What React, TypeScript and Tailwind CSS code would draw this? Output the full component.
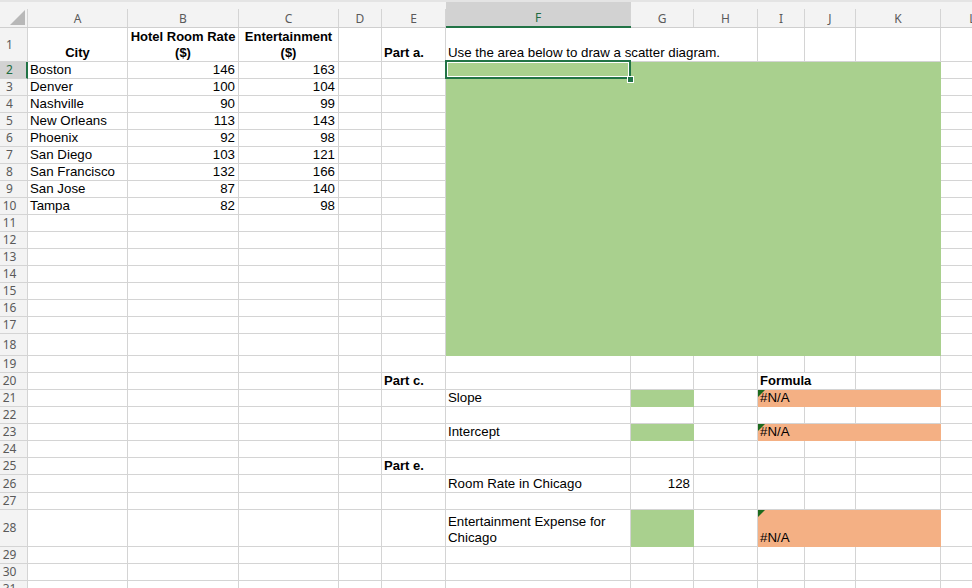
import React from "react";

const GRID = "border-r border-b border-[#d4d4d4]";
const GREEN = "bg-[#a9d08e] border-r border-b border-[#a9d08e]";
const ORANGE = "relative bg-[#f4b084] border-r border-b border-[#f4b084]";

type CP = { children?: React.ReactNode; className?: string };

function Cell({ children, className = "" }: CP) {
  return <div className={`flex items-end whitespace-nowrap ${GRID} ${className}`}>{children}</div>;
}

function Tri() {
  return (
    <svg className="absolute left-0 top-0" width="7" height="7" viewBox="0 0 7 7">
      <polygon points="0,0 7,0 0,7" fill="#1d6a1d" />
    </svg>
  );
}

function RH({ n, active = false }: { n: number; active?: boolean }) {
  return (
    <div
      className={
        active
          ? "flex items-center bg-[#d2d2d2] border-b border-b-[#d4d4d4] border-r-2 border-r-[#217346] text-[#1e6b41] font-['Noto_Sans',sans-serif] text-[12px] leading-[16px]"
          : "flex items-center bg-[#f3f3f3] border-r border-b border-[#d4d4d4] text-[#5a5a5a] font-['Noto_Sans',sans-serif] text-[12px] leading-[16px]"
      }
    >
      <span className="w-[19px] text-center">{n}</span>
    </div>
  );
}

function CH({ l, active = false }: { l: string; active?: boolean }) {
  return (
    <div
      className={
        active
          ? "flex items-end bg-[#d2d2d2] border-b-2 border-[#217346] text-[#1e6b41] font-['Noto_Sans',sans-serif] text-[12px] leading-[16px] shadow-[inset_0_2px_0_#e4e4e4]"
          : "flex items-end bg-[#f3f3f3] border-b border-[#cfcfcf] text-[#5a5a5a] font-['Noto_Sans',sans-serif] text-[12px] leading-[16px] shadow-[inset_0_2px_0_#e4e4e4]"
      }
    >
      <span className="flex-1 text-center">{l}</span>
      <div className="w-px h-[18px] bg-[#d4d4d4]" />
    </div>
  );
}

const cities: [string, number, number][] = [
  ["Boston", 146, 163],
  ["Denver", 100, 104],
  ["Nashville", 90, 99],
  ["New Orleans", 113, 143],
  ["Phoenix", 92, 98],
  ["San Diego", 103, 121],
  ["San Francisco", 132, 166],
  ["San Jose", 87, 140],
  ["Tampa", 82, 98],
];

const cols = ["A", "B", "C", "D", "E", "F", "G", "H", "I", "J", "K", "L"];

export default function App() {
  const cells: React.ReactNode[] = [];

  // header row
  cells.push(
    <div key="corner" className="flex items-end bg-[#f3f3f3] border-b border-[#cfcfcf] shadow-[inset_0_2px_0_#e4e4e4]">
      <div className="flex-1 h-full relative">
        <svg className="absolute left-[10px] top-[10px]" width="15" height="15" viewBox="0 0 15 15">
          <polygon points="15,0 15,15 0,15" fill="#b8b8b8" />
        </svg>
      </div>
      <div className="w-px h-[18px] bg-[#d4d4d4]" />
    </div>
  );
  cols.forEach((c) => cells.push(<CH key={"h" + c} l={c} active={c === "F"} />));

  // row 1
  cells.push(<RH key="r1" n={1} />);
  cells.push(
    <Cell key="1A" className="justify-center font-bold text-[13px] leading-[16px]">City</Cell>
  );
  cells.push(
    <Cell key="1B" className="justify-center font-bold text-[13px] leading-[16px] text-center">
      <span>Hotel Room Rate<br />($)</span>
    </Cell>
  );
  cells.push(
    <Cell key="1C" className="justify-center font-bold text-[13px] leading-[16px] text-center">
      <span>Entertainment<br />($)</span>
    </Cell>
  );
  cells.push(<Cell key="1D" />);
  cells.push(<Cell key="1E" className="pl-[2px] font-bold text-[13px] leading-[16px]">Part a.</Cell>);
  cells.push(
    <Cell key="1F" className="col-span-3 pl-[2px] leading-[16px]">Use the area below to draw a scatter diagram.</Cell>
  );
  cells.push(<Cell key="1I" />);
  cells.push(<Cell key="1J" />);
  cells.push(<Cell key="1K" />);
  cells.push(<Cell key="1L" />);

  // rows 2-18
  for (let r = 2; r <= 18; r++) {
    const d = cities[r - 2];
    cells.push(<RH key={"r" + r} n={r} active={r === 2} />);
    cells.push(<Cell key={r + "A"} className="pl-[2px] leading-[16px]">{d ? d[0] : null}</Cell>);
    cells.push(<Cell key={r + "B"} className="justify-end pr-[3px] leading-[16px]">{d ? d[1] : null}</Cell>);
    cells.push(<Cell key={r + "C"} className="justify-end pr-[3px] leading-[16px]">{d ? d[2] : null}</Cell>);
    cells.push(<Cell key={r + "D"} />);
    cells.push(<Cell key={r + "E"} />);
    if (r === 2) {
      cells.push(
        <div key="green" className="col-span-6 row-span-17 bg-[#a9d08e] relative">
          <div className="absolute left-[-1px] top-[-2px] w-[186px] h-[19px] border-2 border-[#217346]">
            <div className="w-full h-full border border-white" />
          </div>
          <div className="absolute left-[181px] top-[14px] w-[7px] h-[7px] bg-[#217346] border border-white" />
        </div>
      );
    }
    cells.push(<Cell key={r + "L"} />);
  }

  // rows 19-31
  for (let r = 19; r <= 31; r++) {
    cells.push(<RH key={"r" + r} n={r} />);
    cells.push(<Cell key={r + "A"} />);
    cells.push(<Cell key={r + "B"} />);
    cells.push(<Cell key={r + "C"} />);
    cells.push(<Cell key={r + "D"} />);
    if (r === 20) {
      cells.push(<Cell key={r + "E"} className="pl-[2px] font-bold text-[13px] leading-[16px]">Part c.</Cell>);
    } else if (r === 25) {
      cells.push(<Cell key={r + "E"} className="pl-[2px] font-bold text-[13px] leading-[16px]">Part e.</Cell>);
    } else {
      cells.push(<Cell key={r + "E"} />);
    }

    if (r === 20) {
      cells.push(<Cell key={r + "F"} />);
      cells.push(<Cell key={r + "G"} />);
      cells.push(<Cell key={r + "H"} />);
      cells.push(<Cell key={r + "I"} className="col-span-2 pl-[2px] font-bold text-[13px] leading-[16px]">Formula</Cell>);
      cells.push(<Cell key={r + "K"} />);
    } else if (r === 21 || r === 23) {
      cells.push(
        <Cell key={r + "F"} className="pl-[2px] leading-[16px]">{r === 21 ? "Slope" : "Intercept"}</Cell>
      );
      cells.push(<div key={r + "G"} className={GREEN} />);
      cells.push(<Cell key={r + "H"} />);
      cells.push(
        <div key={r + "I"} className={`col-span-3 flex items-end pl-[2px] leading-[16px] ${ORANGE}`}>
          <Tri />
          <span className="relative">#N/A</span>
        </div>
      );
    } else if (r === 26) {
      cells.push(<Cell key={r + "F"} className="pl-[2px] leading-[16px]">Room Rate in Chicago</Cell>);
      cells.push(<Cell key={r + "G"} className="justify-end pr-[3px] leading-[16px]">128</Cell>);
      cells.push(<Cell key={r + "H"} />);
      cells.push(<Cell key={r + "I"} />);
      cells.push(<Cell key={r + "J"} />);
      cells.push(<Cell key={r + "K"} />);
    } else if (r === 28) {
      cells.push(
        <Cell key={r + "F"} className="pl-[2px] leading-[16px]">
          <span>Entertainment Expense for<br />Chicago</span>
        </Cell>
      );
      cells.push(<div key={r + "G"} className={GREEN} />);
      cells.push(<Cell key={r + "H"} />);
      cells.push(
        <div key={r + "I"} className={`col-span-3 flex items-end pl-[2px] leading-[16px] ${ORANGE}`}>
          <Tri />
          <span className="relative">#N/A</span>
        </div>
      );
    } else {
      cells.push(<Cell key={r + "F"} />);
      cells.push(<Cell key={r + "G"} />);
      cells.push(<Cell key={r + "H"} />);
      cells.push(<Cell key={r + "I"} />);
      cells.push(<Cell key={r + "J"} />);
      cells.push(<Cell key={r + "K"} />);
    }
    cells.push(<Cell key={r + "L"} />);
  }

  return (
    <div className="w-[972px] h-[588px] overflow-hidden bg-white">
      <div className="grid w-[1005px] grid-cols-[28px_100px_111px_100px_43px_64px_185px_63px_64px_47px_51px_85px_64px] grid-rows-[28px_34px_repeat(16,17px)_22px_repeat(7,17px)_18px_17px_37px_17px_17px_17px] font-['Liberation_Sans',Arial,sans-serif] text-[13.3px] text-black">
        {cells}
      </div>
    </div>
  );
}
